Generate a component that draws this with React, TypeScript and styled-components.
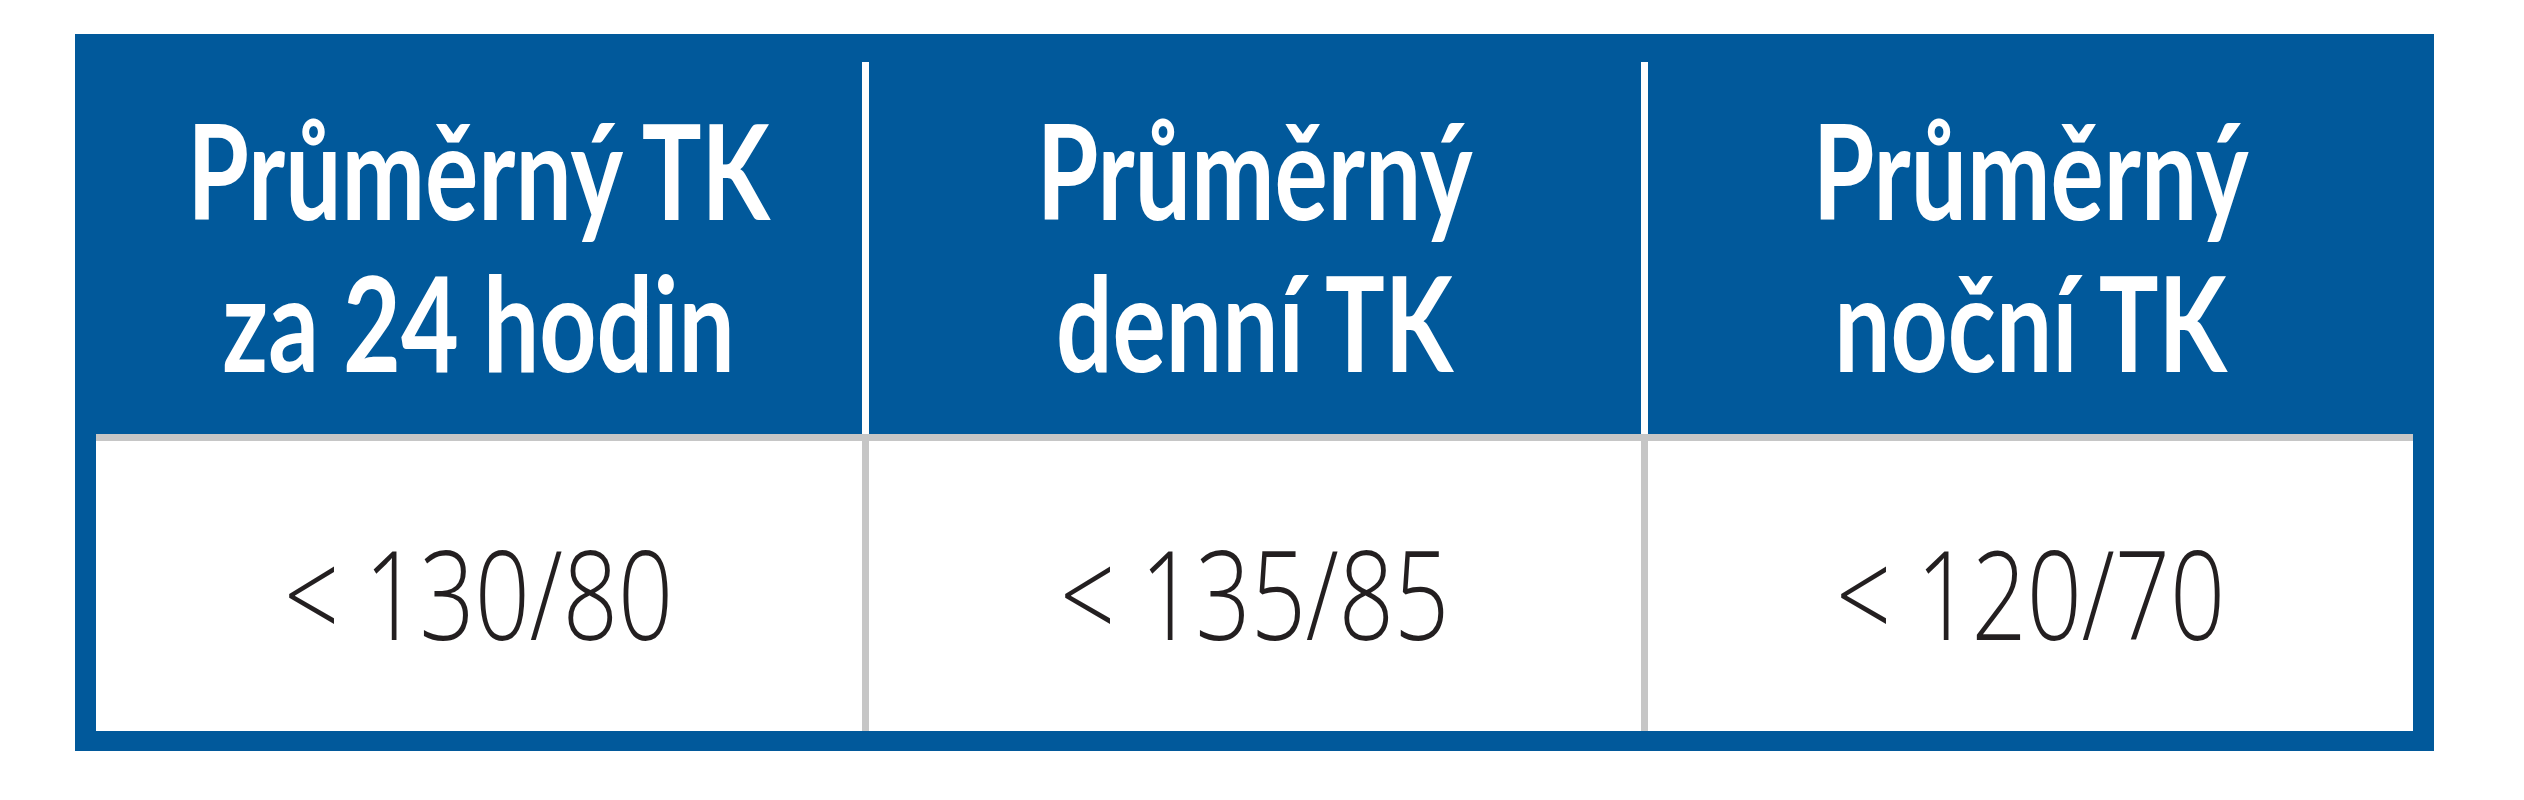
import React from 'react';
import styled, { createGlobalStyle } from 'styled-components';

const BLUE = '#01599b';
const RULE = '#c6c6c6';

const GlobalStyle = createGlobalStyle`
  html, body {
    margin: 0;
    padding: 0;
    background: #ffffff;
  }

  * {
    box-sizing: border-box;
  }
`;

const Page = styled.div`
  width: 2524px;
  height: 800px;
  padding: 34px 0 0 75px;
  background: #ffffff;
`;

const Table = styled.div`
  width: 2359px;
  border: solid ${BLUE};
  border-width: 20px 21px 20px 21px;
  display: flex;
  flex-direction: column;
`;

const HeadRow = styled.div`
  display: grid;
  grid-template-columns: 766px 779px 772px;
  height: 380px;
  padding-top: 8px;
  background: ${BLUE};
`;

const BodyRow = styled.div`
  display: grid;
  grid-template-columns: 766px 779px 772px;
  height: 297px;
  border-top: 7px solid ${RULE};
  background: #ffffff;
`;

const HeadCell = styled.div<{ $divided?: boolean }>`
  display: flex;
  justify-content: center;
  align-items: center;
  padding-bottom: 6px;
  border-left: ${(p) => (p.$divided ? '7px solid #ffffff' : 'none')};
`;

const BodyCell = styled.div<{ $divided?: boolean }>`
  display: flex;
  justify-content: center;
  align-items: center;
  padding-top: 12px;
  border-left: ${(p) => (p.$divided ? `7px solid ${RULE}` : 'none')};
`;

const HeadText = styled.div`
  flex: none;
  font-family: Lato, 'Noto Sans', sans-serif;
  font-weight: 700;
  font-size: 133px;
  line-height: 152px;
  color: #ffffff;
  text-align: center;
  white-space: nowrap;
  transform: scaleX(0.75);
`;

const Value = styled.div`
  flex: none;
  font-family: 'Open Sans', Lato, sans-serif;
  font-weight: 300;
  font-size: 124px;
  line-height: 124px;
  color: #231f20;
  white-space: nowrap;
  transform: scaleX(0.78);
`;

const columns = [
  { head: ['Průměrný TK', 'za 24 hodin'], value: '< 130/80' },
  { head: ['Průměrný', 'denní TK'], value: '< 135/85' },
  { head: ['Průměrný', 'noční TK'], value: '< 120/70' },
];

const App: React.FC = () => {
  return (
    <>
      <GlobalStyle />
      <Page>
        <Table>
          <HeadRow>
            {columns.map((c, i) => (
              <HeadCell key={i} $divided={i > 0}>
                <HeadText>
                  {c.head[0]}
                  <br />
                  {c.head[1]}
                </HeadText>
              </HeadCell>
            ))}
          </HeadRow>
          <BodyRow>
            {columns.map((c, i) => (
              <BodyCell key={i} $divided={i > 0}>
                <Value>{c.value}</Value>
              </BodyCell>
            ))}
          </BodyRow>
        </Table>
      </Page>
    </>
  );
};

export default App;
